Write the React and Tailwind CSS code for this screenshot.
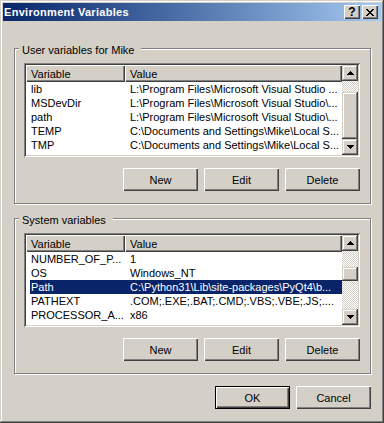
import React from "react";

const userRows = [
  ["lib", "L:\\Program Files\\Microsoft Visual Studio ..."],
  ["MSDevDir", "L:\\Program Files\\Microsoft Visual Studio\\..."],
  ["path", "L:\\Program Files\\Microsoft Visual Studio\\..."],
  ["TEMP", "C:\\Documents and Settings\\Mike\\Local S..."],
  ["TMP", "C:\\Documents and Settings\\Mike\\Local S..."],
];

const sysRows = [
  ["NUMBER_OF_P...", "1"],
  ["OS", "Windows_NT"],
  ["Path", "C:\\Python31\\Lib\\site-packages\\PyQt4\\b...", true],
  ["PATHEXT", ".COM;.EXE;.BAT;.CMD;.VBS;.VBE;.JS;...."],
  ["PROCESSOR_A...", "x86"],
  ["PROCESSOR_ID...", "x86 Family 6 Model 15 Stepping 13, Ge..."],
];

function Arrow({ down }) {
  return (
    <svg width="7" height="4" viewBox="0 0 7 4" shapeRendering="crispEdges">
      {down ? (
        <path d="M0 0h7v1H0zM1 1h5v1H1zM2 2h3v1H2zM3 3h1v1H3z" fill="#000" />
      ) : (
        <path d="M3 0h1v1H3zM2 1h3v1H2zM1 2h5v1H1zM0 3h7v1H0z" fill="#000" />
      )}
    </svg>
  );
}

function ArrowBtn({ down }) {
  return (
    <div className="h-[16px] w-[16px] shrink-0 bg-[#d4d0c8] flex items-center justify-center shadow-[inset_-1px_-1px_#404040,inset_1px_1px_#d4d0c8,inset_-2px_-2px_#808080,inset_2px_2px_#ffffff]">
      <Arrow down={down} />
    </div>
  );
}

function Scrollbar({ before, thumb }) {
  return (
    <div className="w-[16px] shrink-0 flex flex-col">
      <ArrowBtn />
      <div
        className="shrink-0 bg-[image:repeating-conic-gradient(#d4d0c8_0_25%,#ffffff_0_50%)] bg-[length:2px_2px]"
        style={{ height: before }}
      />
      <div
        className="shrink-0 bg-[#d4d0c8] shadow-[inset_-1px_-1px_#404040,inset_1px_1px_#d4d0c8,inset_-2px_-2px_#808080,inset_2px_2px_#ffffff]"
        style={{ height: thumb }}
      />
      <div className="flex-1 bg-[image:repeating-conic-gradient(#d4d0c8_0_25%,#ffffff_0_50%)] bg-[length:2px_2px]" />
      <ArrowBtn down />
    </div>
  );
}

function ListView({ rows, before, thumb }) {
  return (
    <div className="mt-[6px] h-[94px] bg-white p-[2px] flex shadow-[inset_1px_1px_#808080,inset_-1px_-1px_#ffffff,inset_2px_2px_#404040,inset_-2px_-2px_#d4d0c8]">
      <div className="flex-1 min-w-0 flex flex-col overflow-hidden">
        <div className="h-[17px] shrink-0 flex">
          <div className="w-[99px] shrink-0 pl-[5px] flex items-center bg-[#d4d0c8] shadow-[inset_1px_1px_#ffffff,inset_-1px_-1px_#404040,inset_-2px_-2px_#808080]">
            Variable
          </div>
          <div className="flex-1 pl-[5px] flex items-center bg-[#d4d0c8] shadow-[inset_1px_1px_#ffffff,inset_-1px_-1px_#404040,inset_-2px_-2px_#808080]">
            Value
          </div>
        </div>
        {rows.map(([name, value, sel]) => (
          <div
            key={name}
            className={
              sel
                ? "ml-[4px] h-[14px] shrink-0 flex items-center bg-[#0a246a] text-white"
                : "ml-[4px] h-[14px] shrink-0 flex items-center"
            }
          >
            <div className="w-[95px] shrink-0 pl-[1px] whitespace-nowrap overflow-hidden">{name}</div>
            <div className="flex-1 min-w-0 pl-[5px] whitespace-nowrap overflow-hidden">{value}</div>
          </div>
        ))}
      </div>
      <Scrollbar before={before} thumb={thumb} />
    </div>
  );
}

function Btn({ children, def }) {
  return (
    <button
      type="button"
      className={
        def
          ? "w-[75px] h-[23px] border border-black bg-[#d4d0c8] flex items-center justify-center shadow-[inset_1px_1px_#ffffff,inset_-1px_-1px_#404040,inset_-2px_-2px_#808080]"
          : "w-[75px] h-[23px] bg-[#d4d0c8] flex items-center justify-center shadow-[inset_1px_1px_#ffffff,inset_-1px_-1px_#404040,inset_-2px_-2px_#808080]"
      }
    >
      {children}
    </button>
  );
}

function Group({ label, children, className }) {
  return (
    <div
      className={
        "flex flex-col border border-[#808080] shadow-[inset_1px_1px_#ffffff,1px_1px_#ffffff] pl-[9px] pr-[10px] pb-[12px] " +
        (className || "")
      }
    >
      <span className="self-start -ml-[5px] -mt-[5px] pl-[3px] pr-[7px] bg-[#d4d0c8] leading-[13px]">
        {label}
      </span>
      {children}
      <div className="mt-[11px] flex justify-end gap-[6px]">
        <Btn>New</Btn>
        <Btn>Edit</Btn>
        <Btn>Delete</Btn>
      </div>
    </div>
  );
}

export default function App() {
  return (
    <div className="w-[384px] h-[423px] bg-[#d4d0c8] p-[3px] flex flex-col text-[11px] leading-[14px] text-black font-['Liberation_Sans',Arial,sans-serif] shadow-[inset_-1px_-1px_#404040,inset_1px_1px_#d4d0c8,inset_-2px_-2px_#808080,inset_2px_2px_#ffffff] select-none">
      <div className="h-[18px] shrink-0 flex items-center bg-linear-to-r from-[#0a246a] to-[#a6caf0] pl-[1px] pr-[3px]">
        <span className="flex-1 text-white font-bold text-[11px] tracking-[0.3px]">Environment Variables</span>
        <div className="w-[16px] h-[14px] bg-[#d4d0c8] flex items-center justify-center font-bold text-[12px] leading-[14px] shadow-[inset_1px_1px_#ffffff,inset_-1px_-1px_#404040,inset_-2px_-2px_#808080]">
          ?
        </div>
        <div className="ml-[2px] w-[16px] h-[14px] bg-[#d4d0c8] flex items-center justify-center shadow-[inset_1px_1px_#ffffff,inset_-1px_-1px_#404040,inset_-2px_-2px_#808080]">
          <svg width="8" height="7" viewBox="0 0 8 7" shapeRendering="crispEdges">
            <path
              d="M0 0h2v1H0zM6 0h2v1H6zM1 1h2v1H1zM5 1h2v1H5zM2 2h4v1H2zM3 3h2v1H3zM2 4h4v1H2zM1 5h2v1H1zM5 5h2v1H5zM0 6h2v1H0zM6 6h2v1H6z"
              fill="#000"
            />
          </svg>
        </div>
      </div>
      <div className="flex-1 flex flex-col pl-[11px] pr-[10px] pt-[27px]">
        <Group label="User variables for Mike">
          <ListView rows={userRows} before={11} thumb={47} />
        </Group>
        <Group label="System variables" className="mt-[14px]">
          <ListView rows={sysRows} before={16} thumb={14} />
        </Group>
        <div className="mt-[12px] flex justify-end gap-[6px]">
          <Btn def>OK</Btn>
          <Btn>Cancel</Btn>
        </div>
      </div>
    </div>
  );
}
